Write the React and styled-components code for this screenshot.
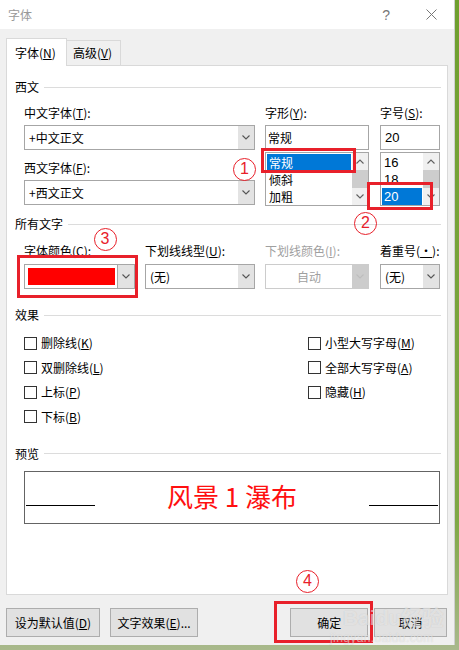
import React from 'react';
import styled, { createGlobalStyle } from 'styled-components';

const Global = createGlobalStyle`
  html, body { margin: 0; padding: 0; }
  body {
    width: 459px; height: 650px; overflow: hidden;
    background: linear-gradient(180deg, #6f9f2e 0%, #7fa845 80%, #a9b98c 100%);
    font-family: "Noto Sans CJK SC", "Liberation Sans", sans-serif;
  }
  #root { width: 459px; height: 650px; }
`;

const RED = '#e8202a';

const Dialog = styled.div`
  position: relative;
  width: 455px;
  height: 645px;
  background: #f0f0f0;
  display: flex;
  flex-direction: column;
  font-family: "Noto Sans CJK SC", "Liberation Sans", sans-serif;
  font-size: 12px;
  color: #000;
  box-sizing: border-box;
  border-right: 1px solid #cfcfcf;
`;

const TitleBar = styled.div`
  height: 29px;
  background: #fff;
  display: flex;
  align-items: center;
  padding: 0 17px 0 8px;
  flex: none;
`;
const Title = styled.span`
  color: #999;
  font-size: 12px;
  line-height: 16px;
  flex: 1;
`;
const Help = styled.span`
  color: #777;
  font-family: "Liberation Sans", sans-serif;
  font-size: 14px;
  margin-right: 36px;
`;

const Body = styled.div`
  padding: 9px 7px 0 6px;
  display: flex;
  flex-direction: column;
`;

const Tabs = styled.div`
  display: flex;
  align-items: flex-end;
  height: 27px;
`;
const Tab = styled.div`
  box-sizing: border-box;
  position: relative;
  z-index: 1;
  width: ${p => p.$w}px;
  height: ${p => (p.$active ? 28 : 25)}px;
  margin-bottom: ${p => (p.$active ? -1 : 0)}px;
  background: ${p => (p.$active ? '#fff' : '#f0f0f0')};
  border: 1px solid #d9d9d9;
  border-bottom: none;
  ${p => (!p.$active ? 'border-left: none;' : '')}
  padding-left: ${p => (p.$active ? 8 : 6)}px;
  display: flex;
  align-items: center;
  line-height: 16px;
`;

const Panel = styled.div`
  box-sizing: border-box;
  width: 442px;
  height: 530px;
  background: #fff;
  border: 1px solid #d9d9d9;
  padding: 13px 6px 0 8px;
  display: flex;
  flex-direction: column;
`;

const Section = styled.div`
  display: flex;
  align-items: center;
  gap: 5px;
  height: 16px;
  line-height: 16px;
  margin-top: ${p => p.$mt || 0}px;
  &::after {
    content: '';
    flex: 1;
    height: 1px;
    background: #dcdcdc;
  }
`;

const Row = styled.div`
  display: flex;
  margin-left: 9px;
  margin-top: ${p => p.$mt || 0}px;
  gap: ${p => p.$gap || 10}px;
`;
const Col = styled.div`
  display: flex;
  flex-direction: column;
  width: ${p => p.$w}px;
  margin-left: ${p => p.$ml || 0}px;
`;
const Label = styled.div`
  height: 16px;
  line-height: 16px;
  white-space: nowrap;
  color: ${p => (p.$disabled ? '#a0a0a0' : '#000')};
  margin-top: ${p => p.$mt || 0}px;
`;

const ComboBox = styled.div`
  box-sizing: border-box;
  height: 25px;
  margin-top: ${p => p.$mt || 0}px;
  border: 1px solid ${p => (p.$disabled ? '#cccccc' : '#a6a6a6')};
  background: #fff;
  display: flex;
`;
const ComboValue = styled.div`
  flex: 1;
  display: flex;
  align-items: center;
  justify-content: ${p => (p.$center ? 'center' : 'flex-start')};
  padding-left: ${p => (p.$center ? 0 : 4)}px;
  color: ${p => (p.$disabled ? '#a0a0a0' : '#000')};
  line-height: 16px;
`;
const DropBtn = styled.div`
  width: 16px;
  background: ${p => (p.$disabled ? '#cccccc' : '#e3e3e3')};
  display: flex;
  align-items: center;
  justify-content: center;
  ${p => (p.$bordered ? 'border-left: 1px solid #a6a6a6;' : '')}
`;
const Swatch = styled.div`
  flex: 1;
  margin: 3px 2px 3px 3px;
  background: #ff0000;
`;

const TextBox = styled.div`
  box-sizing: border-box;
  height: 25px;
  margin-top: 4px;
  border: 1px solid #a6a6a6;
  padding-left: 2px;
  display: flex;
  align-items: center;
  line-height: 16px;
`;

const ListBox = styled.div`
  box-sizing: border-box;
  height: 54px;
  margin-top: 2px;
  border: 1px solid #a6a6a6;
  display: flex;
  overflow: hidden;
`;
const ListItems = styled.div`
  flex: 1;
  padding: 1px 1px 0 1px;
  display: flex;
  flex-direction: column;
`;
const ListItem = styled.div`
  height: 17px;
  line-height: 17px;
  padding-left: 2px;
  background: ${p => (p.$sel ? '#0078d7' : 'transparent')};
  color: ${p => (p.$sel ? '#fff' : '#000')};
  font-size: ${p => (p.$num ? 13 : 12)}px;
  font-family: ${p => (p.$num ? '"Liberation Sans", sans-serif' : 'inherit')};
`;
const ScrollBar = styled.div`
  width: 16px;
  background: #f0f0f0;
  display: flex;
  flex-direction: column;
`;
const ScrollArrow = styled.div`
  height: 17px;
  display: flex;
  align-items: center;
  justify-content: center;
`;
const Thumb = styled.div`
  flex: 1;
  background: #cdcdcd;
`;

const CheckGrid = styled.div`
  display: grid;
  grid-template-columns: 284px 1fr;
  grid-auto-rows: 16px;
  row-gap: 8.5px;
  margin: 12px 0 0 9px;
`;
const CheckItem = styled.div`
  display: flex;
  align-items: center;
  gap: 4px;
  line-height: 16px;
  grid-column: ${p => p.$col};
  grid-row: ${p => p.$row};
`;
const Box = styled.div`
  box-sizing: border-box;
  width: 13px;
  height: 13px;
  border: 1px solid #333;
  background: #fff;
`;

const Preview = styled.div`
  box-sizing: border-box;
  width: 416px;
  height: 53px;
  margin: 9px 0 0 9px;
  border: 1px solid #646464;
  display: flex;
  align-items: center;
  padding: 0 1px;
`;
const PreviewLine = styled.div`
  width: 69px;
  height: 1px;
  background: #000;
  align-self: flex-start;
  margin-top: 33px;
`;
const PreviewText = styled.div`
  flex: 1;
  text-align: center;
  color: #ff1010;
  font-size: 26px;
  line-height: 30px;
  margin-top: -2px;
  white-space: pre;
`;

const ButtonRow = styled.div`
  display: flex;
  margin-top: 13px;
  gap: 10px;
`;
const Button = styled.div`
  box-sizing: border-box;
  width: ${p => p.$w}px;
  height: 29px;
  background: #e1e1e1;
  border: 1px solid #adadad;
  display: flex;
  align-items: center;
  justify-content: center;
  line-height: 16px;
  white-space: nowrap;
  margin-left: ${p => p.$ml || 0}px;
`;

const RedBox = styled.div`
  position: absolute;
  box-sizing: border-box;
  border: 3px solid ${RED};
  left: ${p => p.$x}px;
  top: ${p => p.$y}px;
  width: ${p => p.$w}px;
  height: ${p => p.$h}px;
  z-index: 5;
  pointer-events: none;
`;
const Circle = styled.div`
  position: absolute;
  box-sizing: border-box;
  left: ${p => p.$x - 11.5}px;
  top: ${p => p.$y - 11.5}px;
  width: 23px;
  height: 23px;
  border: 1.5px solid ${RED};
  border-radius: 50%;
  color: ${RED};
  font-family: "Liberation Sans", sans-serif;
  font-size: 16px;
  line-height: 20px;
  text-align: center;
  background: transparent;
  z-index: 5;
`;

const Watermark = styled.div`
  position: absolute;
  left: 330px;
  top: 604px;
  z-index: 6;
  color: rgba(255, 255, 255, 0.5);
  text-shadow: 0 0 1px rgba(120, 120, 120, 0.3);
  font-family: "Liberation Sans", "Noto Sans CJK SC", sans-serif;
  pointer-events: none;
  white-space: nowrap;
`;
const WmBig = styled.div`
  font-size: 21px;
  font-weight: bold;
  line-height: 28px;
  padding-left: 13px;
`;
const WmSmall = styled.div`
  font-size: 12px;
  line-height: 12px;
  letter-spacing: 0.4px;
`;

const Chevron = ({ up, color = '#555' }) => (
  <svg width="8" height="5" viewBox="0 0 8 5">
    <path d={up ? 'M0.5 4.5 L4 1 L7.5 4.5' : 'M0.5 0.5 L4 4 L7.5 0.5'} fill="none" stroke={color} strokeWidth="1.1" />
  </svg>
);

const Combo = ({ children, disabled, center, mt, bordered }) => (
  <ComboBox $disabled={disabled} $mt={mt}>
    <ComboValue $disabled={disabled} $center={center}>{children}</ComboValue>
    <DropBtn $disabled={disabled} $bordered={bordered}>
      <Chevron color={disabled ? '#bdbdbd' : '#555'} />
    </DropBtn>
  </ComboBox>
);

const List = ({ items, sel, num }) => (
  <ListBox>
    <ListItems>
      {items.map(it => (
        <ListItem key={it} $sel={it === sel} $num={num}>{it}</ListItem>
      ))}
    </ListItems>
    <ScrollBar>
      <ScrollArrow><Chevron up color="#606060" /></ScrollArrow>
      <Thumb />
      <ScrollArrow><Chevron color="#606060" /></ScrollArrow>
    </ScrollBar>
  </ListBox>
);

const checks = [
  { t: '删除线', k: 'K', col: 1, row: 1 },
  { t: '双删除线', k: 'L', col: 1, row: 2 },
  { t: '上标', k: 'P', col: 1, row: 3 },
  { t: '下标', k: 'B', col: 1, row: 4 },
  { t: '小型大写字母', k: 'M', col: 2, row: 1 },
  { t: '全部大写字母', k: 'A', col: 2, row: 2 },
  { t: '隐藏', k: 'H', col: 2, row: 3 },
];

export default function App() {
  return (
    <>
      <Global />
      <Dialog>
        <TitleBar>
          <Title>字体</Title>
          <Help>?</Help>
          <svg width="11" height="11" viewBox="0 0 11 11">
            <path d="M0.5 0.5 L10.5 10.5 M10.5 0.5 L0.5 10.5" stroke="#777" strokeWidth="1" />
          </svg>
        </TitleBar>
        <Body>
          <Tabs>
            <Tab $active $w={61}>字体(<u>N</u>)</Tab>
            <Tab $w={54}>高级(<u>V</u>)</Tab>
          </Tabs>
          <Panel>
            <Section>西文</Section>
            <Row $mt={10} $gap={10}>
              <Col $w={231}>
                <Label>中文字体(<u>T</u>):</Label>
                <Combo mt={4}>+中文正文</Combo>
                <Label $mt={10}>西文字体(<u>F</u>):</Label>
                <Combo mt={4}>+西文正文</Combo>
              </Col>
              <Col $w={104}>
                <Label>字形(<u>Y</u>):</Label>
                <TextBox>常规</TextBox>
                <List items={['常规', '倾斜', '加粗']} sel="常规" />
              </Col>
              <Col $w={60} $ml={1}>
                <Label>字号(<u>S</u>):</Label>
                <TextBox>
                  <ListItem $num>20</ListItem>
                </TextBox>
                <List items={['16', '18', '20']} sel="20" num />
              </Col>
            </Row>

            <Section $mt={10}>所有文字</Section>
            <Row $mt={11} $gap={10}>
              <Col $w={111}>
                <Label>字体颜色(<u>C</u>):</Label>
                <ComboBox $mt={5}>
                  <Swatch />
                  <DropBtn $bordered><Chevron /></DropBtn>
                </ComboBox>
              </Col>
              <Col $w={110}>
                <Label>下划线线型(<u>U</u>):</Label>
                <Combo mt={5}>(无)</Combo>
              </Col>
              <Col $w={104}>
                <Label $disabled>下划线颜色(<u>I</u>):</Label>
                <Combo mt={5} disabled center>自动</Combo>
              </Col>
              <Col $w={60} $ml={1}>
                <Label>着重号(<u>·</u>):</Label>
                <Combo mt={5}>(无)</Combo>
              </Col>
            </Row>

            <Section $mt={18}>效果</Section>
            <CheckGrid>
              {checks.map(c => (
                <CheckItem key={c.t} $col={c.col} $row={c.row}>
                  <Box />
                  <span>{c.t}(<u>{c.k}</u>)</span>
                </CheckItem>
              ))}
            </CheckGrid>

            <Section $mt={21}>预览</Section>
            <Preview>
              <PreviewLine />
              <PreviewText>风景 1 瀑布</PreviewText>
              <PreviewLine />
            </Preview>
          </Panel>
          <ButtonRow>
            <Button $w={94}>设为默认值(<u>D</u>)</Button>
            <Button $w={89}>文字效果(<u>E</u>)...</Button>
            <Button $w={78} $ml={82}>确定</Button>
            <Button $w={73} $ml={-4}>取消</Button>
          </ButtonRow>
        </Body>

        <RedBox $x={261} $y={148} $w={95} $h={25} />
        <RedBox $x={367} $y={182} $w={66} $h={28} />
        <RedBox $x={17} $y={255} $w={121} $h={43} />
        <RedBox $x={274} $y={601} $w={99} $h={42} />
        <Circle $x={244.5} $y={169.5}>1</Circle>
        <Circle $x={365.5} $y={223}>2</Circle>
        <Circle $x={105} $y={239}>3</Circle>
        <Circle $x={307.5} $y={581.5}>4</Circle>

        <Watermark>
          <WmBig>Baidu经验</WmBig>
          <WmSmall>jingyan.baidu.com</WmSmall>
        </Watermark>
      </Dialog>
    </>
  );
}
